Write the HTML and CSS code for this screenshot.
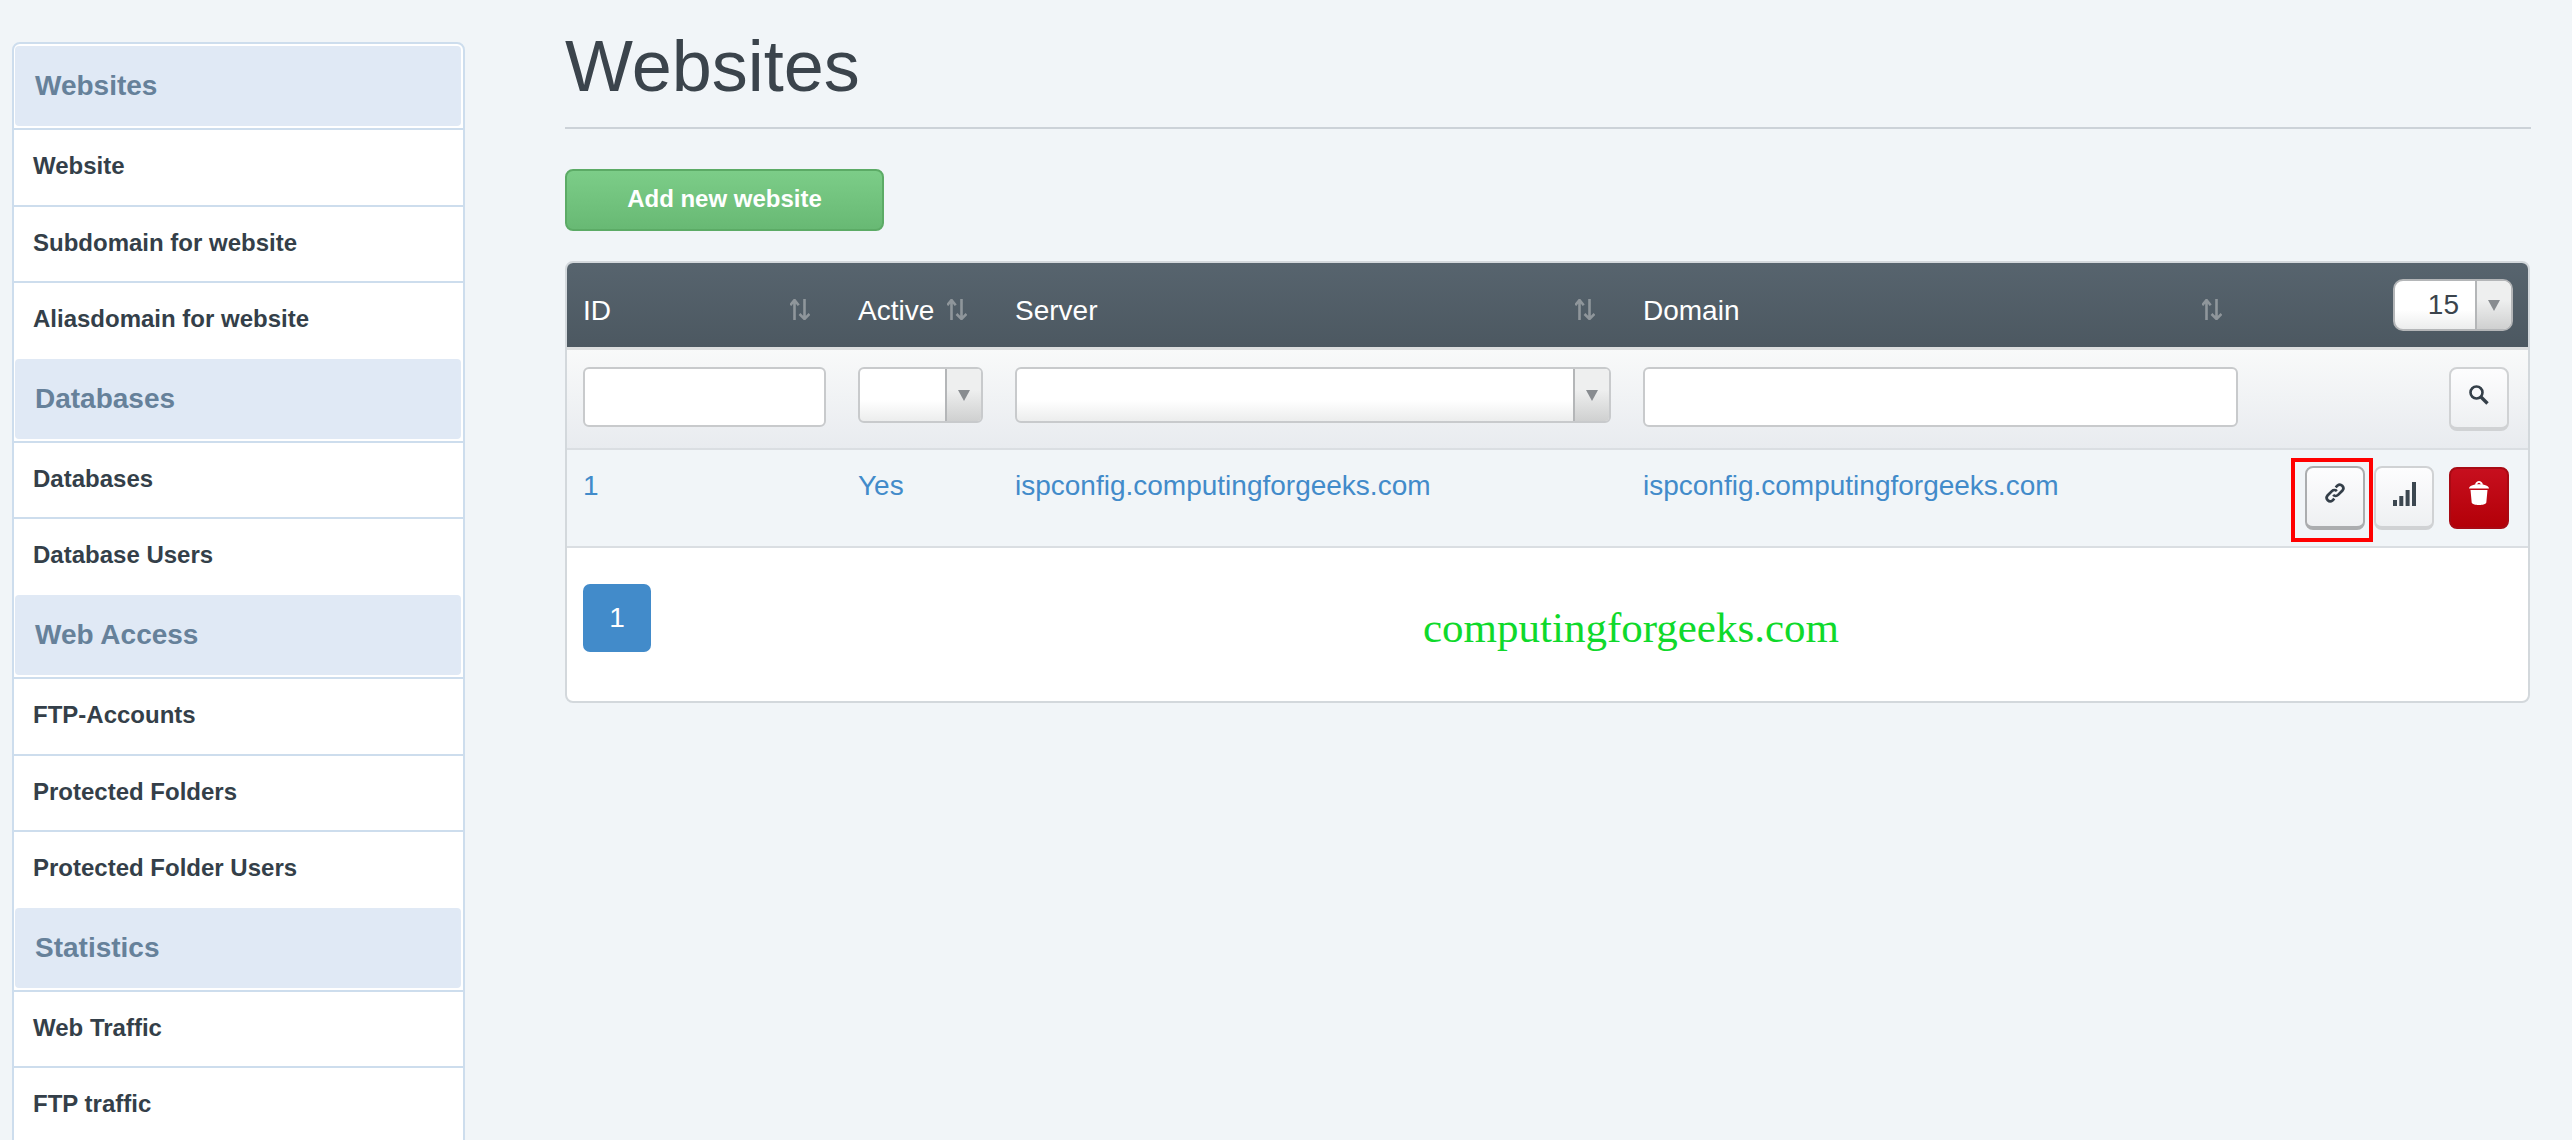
FILE: index.html
```html
<!DOCTYPE html>
<html lang="en">
<head>
<meta charset="utf-8">
<title>Websites</title>
<link rel="stylesheet" href="styles.css">
</head>
<body>
<div class="page">
  <nav class="sidebar">
    <h3 class="side-head first">Websites</h3>
    <a class="side-item">Website</a>
    <a class="side-item">Subdomain for website</a>
    <a class="side-item last">Aliasdomain for website</a>
    <h3 class="side-head">Databases</h3>
    <a class="side-item">Databases</a>
    <a class="side-item last">Database Users</a>
    <h3 class="side-head">Web Access</h3>
    <a class="side-item">FTP-Accounts</a>
    <a class="side-item">Protected Folders</a>
    <a class="side-item last">Protected Folder Users</a>
    <h3 class="side-head">Statistics</h3>
    <a class="side-item">Web Traffic</a>
    <a class="side-item">FTP traffic</a>
  </nav>
  <main class="content">
    <h1 class="title">Websites</h1>
    <button class="add-btn">Add new website</button>
    <div class="panel">
      <table class="grid">
        <colgroup><col class="c-id"><col class="c-active"><col class="c-server"><col class="c-domain"><col class="c-actions"></colgroup>
        <thead>
          <tr class="head-row">
            <th><div class="th-in"><span>ID</span><svg class="sort" viewBox="0 0 20 21"><path d="M4.500 21V1M.3 6.200 4.500 1l4.200 5.200M14.500 0v20M9.500 15 14.500 20l5-5"/></svg></div></th>
            <th><div class="th-in"><span>Active</span><svg class="sort" viewBox="0 0 20 21"><path d="M4.500 21V1M.3 6.200 4.500 1l4.200 5.200M14.500 0v20M9.500 15 14.500 20l5-5"/></svg></div></th>
            <th><div class="th-in"><span>Server</span><svg class="sort" viewBox="0 0 20 21"><path d="M4.500 21V1M.3 6.200 4.500 1l4.200 5.200M14.500 0v20M9.500 15 14.500 20l5-5"/></svg></div></th>
            <th><div class="th-in"><span>Domain</span><svg class="sort" viewBox="0 0 20 21"><path d="M4.500 21V1M.3 6.200 4.500 1l4.200 5.200M14.500 0v20M9.500 15 14.500 20l5-5"/></svg></div></th>
            <th class="th-right">
              <div class="select per-page"><span class="select-val">15</span><span class="select-arrow"><i class="tri"></i></span></div>
            </th>
          </tr>
          <tr class="filter-row">
            <td><input class="field" type="text"></td>
            <td><div class="select"><span class="select-val"></span><span class="select-arrow"><i class="tri"></i></span></div></td>
            <td><div class="select"><span class="select-val"></span><span class="select-arrow"><i class="tri"></i></span></div></td>
            <td><input class="field" type="text"></td>
            <td class="actions">
              <button class="icon-btn search">
                <svg class="ic-search" viewBox="0 0 20 20"><circle cx="7.500" cy="7.500" r="6" /><path class="thick" d="M12 12 18.500 18.500"/></svg>
              </button>
            </td>
          </tr>
        </thead>
        <tbody>
          <tr class="data-row">
            <td><a class="lnk">1</a></td>
            <td><a class="lnk">Yes</a></td>
            <td><a class="lnk">ispconfig.computingforgeeks.com</a></td>
            <td><a class="lnk">ispconfig.computingforgeeks.com</a></td>
            <td class="actions">
              <div class="act-group">
                <span class="mark">
                  <button class="icon-btn hot">
                    <svg class="ic-link" viewBox="0 0 20 20"><path d="M8.300 11.700a3.200 3.200 0 0 0 4.500 0l4-4a3.200 3.200 0 0 0-4.500-4.500L10.600 4.900"/><path d="M11.700 8.300a3.200 3.200 0 0 0-4.500 0l-4 4a3.200 3.200 0 0 0 4.500 4.500l1.700-1.700"/></svg>
                  </button>
                </span>
                <button class="icon-btn">
                  <svg class="ic-bars" viewBox="0 0 23 24"><rect x="0" y="18" width="4" height="6"/><rect x="6.300" y="14" width="4" height="10"/><rect x="12.600" y="8" width="4" height="16"/><rect x="19" y="0" width="4" height="24"/></svg>
                </button>
                <button class="icon-btn danger">
                  <svg class="ic-trash" viewBox="0 0 20 24"><path d="M0 7.600C.3 5 4 3.300 10 3.300s9.700 1.700 10 4.300z"/><path d="M6 3.800C6.500 1.200 8.300 0 10 0s3.500 1.200 4 3.800h-2C11.600 2.500 10.800 1.800 10 1.800s-1.600.7-2 2z"/><path d="M1.500 9h17l-1.200 12.500c-.2 1.600-3.400 2.500-7.300 2.500s-7.100-.9-7.300-2.500z"/></svg>
                </button>
              </div>
            </td>
          </tr>
        </tbody>
      </table>
      <div class="foot">
        <a class="page-btn">1</a>
        <span class="watermark">computingforgeeks.com</span>
      </div>
    </div>
  </main>
</div>
</body>
</html>
```
FILE: styles.css
```css
* { box-sizing: border-box; }
html, body { margin: 0; height: 100%; overflow: hidden; }
body {
  background: #f1f5f8;
  font-family: "Liberation Sans", Arial, sans-serif;
  color: #343f49;
}
.page { display: flex; align-items: flex-start; height: 1140px; overflow: hidden; }

.sidebar {
  width: 453px;
  margin: 42px 0 0 12px;
  flex: none;
  background: #fff;
  border: 2px solid #cddded;
  border-radius: 8px 8px 0 0;
  display: flex;
  flex-direction: column;
}
.side-head {
  margin: 0 2px 0 1px;
  height: 80px;
  background: #e0e9f5;
  border-radius: 4px;
  color: #66819a;
  font-size: 28px;
  font-weight: 700;
  line-height: 80px;
  padding-left: 20px;
  flex: none;
}
.side-head.first { margin-top: 2px; }
.side-item {
  display: block;
  height: 76.500px;
  flex: none;
  padding-left: 19px;
  border-top: 2px solid #cddded;
  font-size: 24px;
  font-weight: 700;
  color: #343f49;
  line-height: 72px;
}
.side-head + .side-item { margin-top: 2px; }
.side-item.last { margin-bottom: 1.300px; }

.content { margin-left: 100px; width: 1966px; flex: none; }
.title {
  margin: 0;
  height: 129px;
  padding-top: 24px;
  border-bottom: 2px solid #ccd2d8;
  font-size: 72px;
  font-weight: 400;
  line-height: 84px;
  color: #3b444c;
}
.add-btn {
  display: block;
  margin: 40px 0 0;
  width: 319px;
  height: 62px;
  border: 2px solid #5cab66;
  border-radius: 8px;
  background: linear-gradient(#7ccd88, #68b974);
  color: #fff;
  font: 700 24px "Liberation Sans", Arial, sans-serif;
  padding: 0 0 2px;
}
.panel {
  margin-top: 30px;
  width: 1965px;
  border: 2px solid #d3d8dc;
  border-radius: 8px;
  background: #fff;
  overflow: hidden;
}
.grid { width: 1961px; border-collapse: separate; border-spacing: 0; table-layout: fixed; font-size: 28px; }
.c-id { width: 275px; }
.c-active { width: 157px; }
.c-server { width: 628px; }
.c-domain { width: 627px; }
.c-actions { width: 274px; }

.head-row { height: 84px; background: linear-gradient(#57646e, #4c5861); }
.head-row th {
  padding: 30px 16px 0;
  vertical-align: top;
  font-weight: 400;
  color: #fff;
  text-align: left;
}
.th-in { display: flex; justify-content: space-between; align-items: center; padding-right: 16px; height: 36px; }
.sort { width: 20px; height: 21px; flex: none; margin-top: -3px; }
.sort path { fill: none; stroke: #8f969b; stroke-width: 2.600; }
.head-row .th-right { padding: 16px 15px 0 16px; }

.filter-row { height: 103px; background: linear-gradient(#f9fafa, #e8ebef); }
.filter-row td {
  border-top: 3px solid #dcdedf;
  border-bottom: 2px solid #dadee2;
  padding: 17px 16px 0;
  vertical-align: top;
}
.field {
  display: block;
  width: 100%;
  height: 60px;
  border: 2px solid #c8cacc;
  border-radius: 6px;
  background: #fff;
}
.select {
  display: flex;
  height: 56px;
  border: 2px solid #c8cacc;
  border-radius: 6px;
  background: linear-gradient(#fff 60%, #eceded);
  overflow: hidden;
}
.select-val { flex: 1; text-align: right; padding-right: 16px; color: #3b444c; line-height: 48px; font-size: 28px; }
.select-arrow {
  width: 36px;
  flex: none;
  display: flex;
  align-items: center;
  justify-content: center;
  border-left: 2px solid #b4b6b8;
  background: linear-gradient(#eeefef 40%, #cfd0d0);
}
.tri { width: 0; height: 0; border: 6px solid transparent; border-width: 11px 6px 0; border-top-color: #888c90; }
.per-page { width: 120px; height: 52px; margin-left: auto; border-color: #b4b6b8; border-radius: 10px; }

.filter-row .actions, .data-row .actions { padding-right: 19px; text-align: right; }
.icon-btn {
  display: inline-flex;
  align-items: flex-start;
  justify-content: center;
  width: 60px;
  height: 64px;
  border: 2px solid #d0d2d4;
  border-bottom-width: 4px;
  border-radius: 8px;
  background: linear-gradient(#fdfdfe, #eef0f2);
  padding: 14px 0 0;
}
.icon-btn.search { padding-top: 16px; }
.icon-btn.hot { border-color: #abadaf; }
.icon-btn.danger {
  height: 62px;
  margin-top: 1px;
  border: 2px solid #a80a14;
  background: linear-gradient(#c70f1e, #b30008);
  margin-left: 15px;
  padding-top: 12px;
}
.ic-search { width: 20px; height: 20px; }
.ic-search circle { fill: none; stroke: #343f49; stroke-width: 2.600; }
.ic-search .thick { fill: none; stroke: #343f49; stroke-width: 3.400; }
.ic-link { width: 22px; height: 22px; }
.ic-link path { fill: none; stroke: #343f49; stroke-width: 2.500; }
.ic-bars { width: 23px; height: 24px; fill: #3c4750; }
.ic-trash { width: 20px; height: 24px; fill: #fff; }

.data-row { height: 98px; background: #f1f5f8; }
.data-row td {
  border-bottom: 2px solid #dadee2;
  padding: 20px 16px 0;
  vertical-align: top;
  line-height: 32px;
}
.data-row .actions { padding-top: 16px; }
.lnk { color: #428bca; }
.act-group { display: flex; justify-content: flex-end; align-items: flex-start; }
.mark {
  display: block;
  border: 4px solid #ff0000;
  padding: 4px 4px 0 10px;
  height: 84px;
  margin-top: -8px;
  margin-right: 1px;
}

.foot { height: 153px; display: flex; align-items: flex-start; padding: 36px 16px 0; }
.page-btn {
  width: 68px;
  height: 68px;
  background: #428bca;
  border-radius: 7px;
  color: #fff;
  font-size: 28px;
  line-height: 68px;
  text-align: center;
  flex: none;
}
.watermark {
  margin-left: 772px;
  margin-top: 16px;
  font-family: "Liberation Serif", "Times New Roman", serif;
  font-size: 43px;
  line-height: 56px;
  color: #0fd92b;
}
```
